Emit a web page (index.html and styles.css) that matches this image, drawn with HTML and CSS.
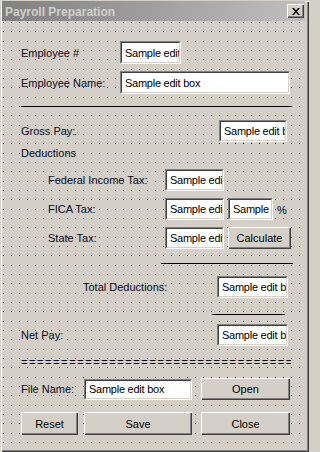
FILE: index.html
```html
<!DOCTYPE html>
<html>
<head>
<meta charset="utf-8">
<title>Payroll Preparation</title>
<link rel="stylesheet" href="styles.css">
</head>
<body>
<div class="window">
  <div class="titlebar">
    <span class="title">Payroll Preparation</span>
    <span class="close"><svg width="8" height="7" viewBox="0 0 8 7"><path d="M0 0h2l2 2.5L6 0h2L5 3.5 8 7H6L4 4.5 2 7H0l3-3.5z" fill="#000"/></svg></span>
  </div>
  <div class="client">
    <div class="row row-emp">
      <span class="lbl lbl-emp">Employee #</span>
      <div class="edit e-emp"><span>Sample edit box</span></div>
    </div>
    <div class="row row-name">
      <span class="lbl lbl-emp">Employee Name:</span>
      <div class="edit e-name"><span>Sample edit box</span></div>
    </div>
    <div class="hr hr-top"></div>
    <div class="row row-gross">
      <span class="lbl lbl-gross">Gross Pay:</span>
      <div class="edit e-pay"><span>Sample edit box</span></div>
    </div>
    <div class="row row-ded">
      <span class="lbl">Deductions</span>
    </div>
    <div class="row row-fed sub">
      <span class="lbl lbl-sub">Federal Income Tax:</span>
      <div class="edit e-tax"><span>Sample edit box</span></div>
    </div>
    <div class="row row-fica sub">
      <span class="lbl lbl-sub">FICA Tax:</span>
      <div class="edit e-tax"><span>Sample edit box</span></div>
      <div class="edit e-pct"><span>Sample edit box</span></div>
      <span class="lbl pct">%</span>
    </div>
    <div class="row row-state sub">
      <span class="lbl lbl-sub">State Tax:</span>
      <div class="edit e-tax"><span>Sample edit box</span></div>
      <button class="btn b-calc">Calculate</button>
    </div>
    <div class="hr hr-mid"></div>
    <div class="row row-total">
      <span class="lbl lbl-total">Total Deductions:</span>
      <div class="edit e-sum"><span>Sample edit box</span></div>
    </div>
    <div class="hr hr-short"></div>
    <div class="row row-net">
      <span class="lbl lbl-net">Net Pay:</span>
      <div class="edit e-sum"><span>Sample edit box</span></div>
    </div>
    <div class="eq">==================================</div>
    <div class="row row-file">
      <span class="lbl lbl-file">File Name:</span>
      <div class="edit e-file"><span>Sample edit box</span></div>
      <button class="btn b-wide b-open">Open</button>
    </div>
    <div class="row row-btns">
      <button class="btn b-reset">Reset</button>
      <button class="btn b-save">Save</button>
      <button class="btn b-wide b-close">Close</button>
    </div>
  </div>
</div>
</body>
</html>
```

FILE: styles.css
```css
html, body {
  margin: 0;
  padding: 0;
  background: #d4d0c8;
}
body {
  font-family: "Liberation Sans", Arial, sans-serif;
  font-size: 11px;
  color: #0a0a20;
}
.window {
  box-sizing: border-box;
  width: 309px;
  height: 452px;
  padding: 1px 4px 3px 2px;
  background: #d4d0c8;
  box-shadow: inset 1px 1px #d4d0c8, inset 2px 2px #fff, inset -1px -1px #404040, inset -2px -2px #808080;
  display: flex;
  flex-direction: column;
}
.titlebar {
  flex: none;
  height: 20px;
  display: flex;
  align-items: center;
  justify-content: space-between;
  padding: 0 1px 0 3px;
  background: linear-gradient(to right, #808080, #c0c0c0);
}
.title {
  font-weight: bold;
  font-size: 12px;
  color: #d4d0c8;
  padding-top: 1px;
}
.close {
  box-sizing: border-box;
  width: 17px;
  height: 14px;
  display: flex;
  align-items: center;
  justify-content: center;
  background: #d4d0c8;
  box-shadow: inset 1px 1px #fff, inset -1px -1px #404040, inset -2px -2px #808080;
}
.client {
  flex: 1;
  padding-left: 19px;
  background-color: #d4d0c8;
  background-image:
    conic-gradient(at 1px 1px, transparent 75%, #000 0),
    conic-gradient(at 1px 1px, transparent 75%, #000 0),
    conic-gradient(at 1px 1px, transparent 75%, #000 0);
  background-size: 8px 28px;
  background-position: 1px 1px, 1px 10px, 1px 20px;
}
.row {
  display: flex;
  align-items: center;
  height: 22px;
}
.lbl {
  white-space: nowrap;
  flex: none;
}
.edit {
  box-sizing: border-box;
  flex: none;
  height: 22px;
  border: 1px solid;
  border-color: #808080 #fff #fff #808080;
}
.edit span {
  box-sizing: border-box;
  display: flex;
  align-items: center;
  height: 100%;
  padding-left: 3px;
  border: 1px solid;
  border-color: #404040 #d4d0c8 #d4d0c8 #404040;
  background: #fff;
  color: #000;
  overflow: hidden;
  white-space: nowrap;
  letter-spacing: -0.25px;
}
.btn {
  box-sizing: border-box;
  flex: none;
  height: 22px;
  margin: 0;
  padding: 0;
  border: 0;
  font: inherit;
  color: #000;
  background: #d4d0c8;
  box-shadow: inset 1px 1px #fff, inset -1px -1px #404040, inset -2px -2px #808080;
}
.hr {
  height: 1px;
  background: #000;
}

/* rows */
.row-emp { margin-top: 20px; height: 23px; }
.row-emp .edit { height: 23px; }
.row-name { margin-top: 7px; height: 23px; }
.row-name .edit { height: 23px; }
.lbl-emp { width: 99px; }
.e-emp { width: 61px; }
.e-name { width: 170px; }

.hr-top { margin-top: 12px; width: 270px; }

.row-gross { margin-top: 13px; }
.lbl-gross { width: 198px; }
.e-pay { width: 68px; }

.row-ded { margin-top: 4px; height: 14px; }

.sub { padding-left: 27px; gap: 4px; }
.lbl-sub { width: 113px; }
.row-fed { margin-top: 9px; }
.row-fica { margin-top: 7px; }
.row-state { margin-top: 7px; }
.e-tax { width: 59px; }
.e-pct { width: 45px; }
.pct { padding-top: 2px; }
.b-calc { width: 63px; }

.hr-mid { margin-top: 14px; margin-left: 140px; width: 132px; }

.row-total { margin-top: 12px; padding-left: 62px; }
.lbl-total { width: 134px; }
.e-sum { width: 71px; }

.hr-short { margin-top: 16px; margin-left: 191px; width: 73px; }

.row-net { margin-top: 9px; }
.lbl-net { width: 196px; }

.eq {
  margin-top: 10px;
  width: 270px;
  height: 12px;
  line-height: 12px;
  overflow: hidden;
  white-space: nowrap;
  letter-spacing: 1.6px;
}

.row-file { margin-top: 10px; }
.lbl-file { width: 63px; }
.e-file { width: 108px; height: 21px; }
.b-open { margin-left: 9px; }
.b-wide { width: 89px; }

.row-btns { margin-top: 12px; height: 23px; }
.row-btns .btn { height: 23px; }
.b-reset { width: 57px; }
.b-save { width: 108px; margin-left: 6px; }
.b-close { margin-left: 9px; }
```
